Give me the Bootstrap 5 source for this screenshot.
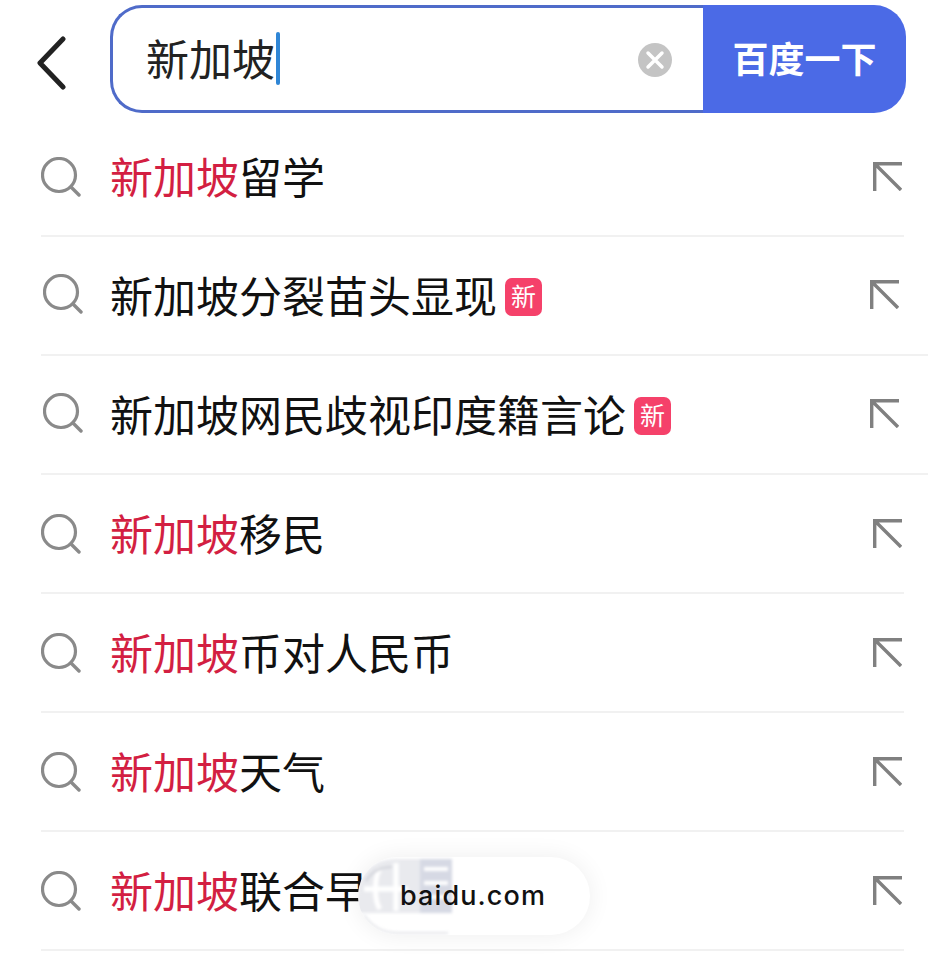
<!DOCTYPE html>
<html lang="zh-CN">
<head>
    <meta charset="UTF-8">
    <meta name="viewport" content="width=device-width, initial-scale=1.0">
    <title>新加坡 - 百度</title>
    <link href="https://cdn.jsdelivr.net/npm/bootstrap@5.3.0/dist/css/bootstrap.min.css" rel="stylesheet">
    <style>
        body {
            background: #fff;
            font-family: "Liberation Sans", "Noto Sans CJK SC", sans-serif;
            color: #111;
            overflow: hidden;
        }
        .page-wrap { width: 946px; height: 954px; position: relative; overflow: hidden; }

        .search-head { height: 118px; padding: 5px 40px 0 36px; }
        .back-btn { width: 74px; height: 108px; padding-top: 8px; }
        .search-box { width: 796px; height: 108px; }
        .search-input {
            padding: 0 30px 0 33px;
            border: 3px solid #4f6bc9;
            border-right: 0;
            border-radius: 32px 0 0 32px;
        }
        .query-text { font-size: 43px; line-height: 1; color: #222; margin-top: 5px; }
        .caret-bar { width: 4px; height: 53px; background: #2f86d6; border-radius: 2px; margin: -1px 0 0 1px; }
        .clear-icon { margin-right: 1px; margin-top: 2px; }
        .search-btn {
            width: 203px; height: 108px;
            padding-top: 10px;
            background: #4b6ae6;
            color: #fff;
            font-size: 36px;
            font-weight: 700;
            border: 0;
            border-radius: 0 32px 32px 0;
        }
        .search-btn:hover { background: #4b6ae6; color: #fff; }

        .sug-row { height: 119px; margin: 0 42px 0 41px; padding-right: 2px; border-bottom: 2px solid #f1f1f1; }
        .sug-row.tight { padding: 0 5px 0 2px; }
        .sug-row.long-line { margin-right: 18px; padding-right: 29px; }
        .sug-row.tight > svg { margin-bottom: 3px; }
        .sug-text { margin: 5px 0 0 29px; font-size: 43px; line-height: 1; color: #111; white-space: nowrap; }
        .sug-row.tight .sug-text { margin-left: 27px; }
        .hit { color: #d31f42; }
        .new-tag {
            width: 37px; height: 38px;
            margin: 2px 0 0 8px;
            background: #f5416a;
            color: #fff;
            border-radius: 7px;
            font-size: 25px;
            line-height: 38px;
            text-align: center;
        }

        .domain-pill {
            position: absolute; left: 358px; top: 857px;
            width: 232px; height: 78px;
            border-radius: 39px;
            background: #fff;
            box-shadow: 0 0 24px rgba(0,0,0,.07);
            overflow: hidden;
        }
        .pill-thumb { position: absolute; left: 0; top: 0; width: 100px; height: 78px; filter: blur(1.5px); }
        .pill-text { position: relative; font-family: "Inter", "Liberation Sans", sans-serif; font-weight: 500; font-size: 27px; letter-spacing: 1.1px; color: #111; padding-left: 42px; line-height: 78px; }
    </style>
</head>
<body>
<div class="page-wrap">
    <!-- search bar -->
    <div class="search-head d-flex align-items-start">
        <div class="back-btn d-flex align-items-center flex-shrink-0">
            <svg width="30" height="54" viewBox="0 0 30 54"><path d="M27 3 L4 27 L27 51" fill="none" stroke="#222" stroke-width="5" stroke-linecap="round" stroke-linejoin="round"/></svg>
        </div>
        <div class="search-box d-flex flex-shrink-0">
            <div class="search-input flex-grow-1 d-flex align-items-center">
                <span class="query-text">新加坡</span>
                <span class="caret-bar"></span>
                <svg class="clear-icon ms-auto" width="34" height="34" viewBox="0 0 34 34"><circle cx="17" cy="17" r="17" fill="#c4c4c4"/><path d="M10 10 L24 24 M24 10 L10 24" stroke="#fff" stroke-width="3.5" stroke-linecap="round"/></svg>
            </div>
            <button class="search-btn btn flex-shrink-0" type="button">百度一下</button>
        </div>
    </div>

    <!-- suggestions -->
    <div class="sug-row d-flex align-items-center">
        <svg class="flex-shrink-0" width="40" height="40" viewBox="0 0 40 40"><circle cx="18" cy="18" r="16.5" fill="none" stroke="#8a8a8a" stroke-width="3.2"/><path d="M30 30 L38 38" stroke="#8a8a8a" stroke-width="3.4" stroke-linecap="round"/></svg>
        <div class="sug-text"><span class="hit">新加坡</span>留学</div>
        <svg class="ms-auto flex-shrink-0" width="29" height="29" viewBox="0 0 29 29"><path d="M1.7 29 V1.7 H29 M1.7 1.7 L28 28" fill="none" stroke="#808080" stroke-width="3.4"/></svg>
    </div>
    <div class="sug-row tight long-line d-flex align-items-center">
        <svg class="flex-shrink-0" width="40" height="40" viewBox="0 0 40 40"><circle cx="18" cy="18" r="16.5" fill="none" stroke="#8a8a8a" stroke-width="3.2"/><path d="M30 30 L38 38" stroke="#8a8a8a" stroke-width="3.4" stroke-linecap="round"/></svg>
        <div class="sug-text">新加坡分裂苗头显现</div>
        <div class="new-tag flex-shrink-0">新</div>
        <svg class="ms-auto flex-shrink-0" width="29" height="29" viewBox="0 0 29 29"><path d="M1.7 29 V1.7 H29 M1.7 1.7 L28 28" fill="none" stroke="#808080" stroke-width="3.4"/></svg>
    </div>
    <div class="sug-row tight long-line d-flex align-items-center">
        <svg class="flex-shrink-0" width="40" height="40" viewBox="0 0 40 40"><circle cx="18" cy="18" r="16.5" fill="none" stroke="#8a8a8a" stroke-width="3.2"/><path d="M30 30 L38 38" stroke="#8a8a8a" stroke-width="3.4" stroke-linecap="round"/></svg>
        <div class="sug-text">新加坡网民歧视印度籍言论</div>
        <div class="new-tag flex-shrink-0">新</div>
        <svg class="ms-auto flex-shrink-0" width="29" height="29" viewBox="0 0 29 29"><path d="M1.7 29 V1.7 H29 M1.7 1.7 L28 28" fill="none" stroke="#808080" stroke-width="3.4"/></svg>
    </div>
    <div class="sug-row d-flex align-items-center">
        <svg class="flex-shrink-0" width="40" height="40" viewBox="0 0 40 40"><circle cx="18" cy="18" r="16.5" fill="none" stroke="#8a8a8a" stroke-width="3.2"/><path d="M30 30 L38 38" stroke="#8a8a8a" stroke-width="3.4" stroke-linecap="round"/></svg>
        <div class="sug-text"><span class="hit">新加坡</span>移民</div>
        <svg class="ms-auto flex-shrink-0" width="29" height="29" viewBox="0 0 29 29"><path d="M1.7 29 V1.7 H29 M1.7 1.7 L28 28" fill="none" stroke="#808080" stroke-width="3.4"/></svg>
    </div>
    <div class="sug-row d-flex align-items-center">
        <svg class="flex-shrink-0" width="40" height="40" viewBox="0 0 40 40"><circle cx="18" cy="18" r="16.5" fill="none" stroke="#8a8a8a" stroke-width="3.2"/><path d="M30 30 L38 38" stroke="#8a8a8a" stroke-width="3.4" stroke-linecap="round"/></svg>
        <div class="sug-text"><span class="hit">新加坡</span>币对人民币</div>
        <svg class="ms-auto flex-shrink-0" width="29" height="29" viewBox="0 0 29 29"><path d="M1.7 29 V1.7 H29 M1.7 1.7 L28 28" fill="none" stroke="#808080" stroke-width="3.4"/></svg>
    </div>
    <div class="sug-row d-flex align-items-center">
        <svg class="flex-shrink-0" width="40" height="40" viewBox="0 0 40 40"><circle cx="18" cy="18" r="16.5" fill="none" stroke="#8a8a8a" stroke-width="3.2"/><path d="M30 30 L38 38" stroke="#8a8a8a" stroke-width="3.4" stroke-linecap="round"/></svg>
        <div class="sug-text"><span class="hit">新加坡</span>天气</div>
        <svg class="ms-auto flex-shrink-0" width="29" height="29" viewBox="0 0 29 29"><path d="M1.7 29 V1.7 H29 M1.7 1.7 L28 28" fill="none" stroke="#808080" stroke-width="3.4"/></svg>
    </div>
    <div class="sug-row d-flex align-items-center">
        <svg class="flex-shrink-0" width="40" height="40" viewBox="0 0 40 40"><circle cx="18" cy="18" r="16.5" fill="none" stroke="#8a8a8a" stroke-width="3.2"/><path d="M30 30 L38 38" stroke="#8a8a8a" stroke-width="3.4" stroke-linecap="round"/></svg>
        <div class="sug-text"><span class="hit">新加坡</span>联合早报</div>
        <svg class="ms-auto flex-shrink-0" width="29" height="29" viewBox="0 0 29 29"><path d="M1.7 29 V1.7 H29 M1.7 1.7 L28 28" fill="none" stroke="#808080" stroke-width="3.4"/></svg>
    </div>

    <!-- domain pill over the last row, thumbnail is just a blurred smear -->
    <div class="domain-pill">
        <svg class="pill-thumb" viewBox="0 0 100 78">
            <path d="M0 39 C0 16 16 2 38 2 H62 V56 H0 Z" fill="#e9eaee"/>
            <path d="M22 12 C16 20 16 44 22 52 M38 6 V54 M6 32 H50" stroke="#fff" stroke-width="5" fill="none"/>
            <path d="M8 24 C14 14 24 10 34 10" stroke="#d0d2d9" stroke-width="2" fill="none"/>
            <rect x="62" y="2" width="32" height="54" fill="#d6d9e4"/>
            <path d="M66 12 H90 M66 26 H90 M66 40 H90" stroke="#fff" stroke-width="4"/>
            <path d="M6 58 C14 70 26 76 40 76 H90" stroke="#e4e5e9" stroke-width="2" fill="none"/>
        </svg>
        <div class="pill-text">baidu.com</div>
    </div>
</div>
<script src="https://cdn.jsdelivr.net/npm/bootstrap@5.3.0/dist/js/bootstrap.bundle.min.js"></script>
</body>
</html>
